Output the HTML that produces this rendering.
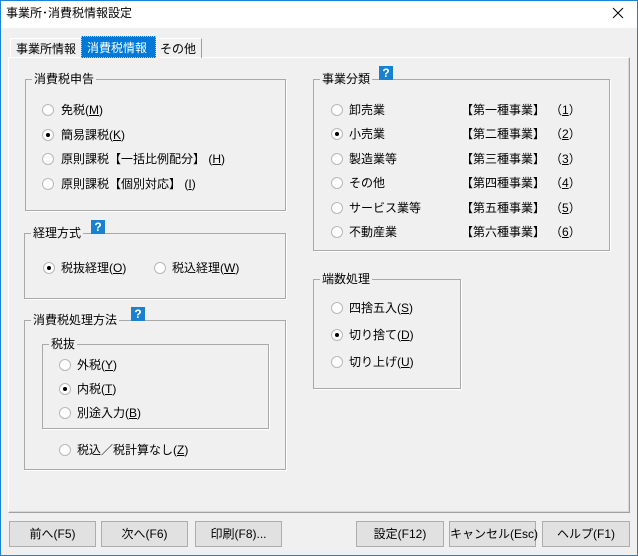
<!DOCTYPE html>
<html><head><meta charset="utf-8"><style>
*{margin:0;padding:0;box-sizing:border-box}
body{width:638px;height:556px;background:#f0f0f0;font-family:"Liberation Sans","Noto Sans CJK JP",sans-serif;font-size:12px;color:#000;position:relative;overflow:hidden}
.win{position:absolute;left:0;top:0;width:638px;height:556px;border:1px solid #1883d7}
.title{position:absolute;left:1px;top:1px;width:636px;height:27px;background:#fff}
.t{position:absolute;white-space:nowrap;line-height:14px}
.panel{position:absolute;left:8px;top:57px;width:622px;height:456px;border:1px solid #fff;border-right-color:#a0a0a0;border-bottom-color:#a0a0a0;box-shadow:inset -1px -1px 0 #d8d8d8}
.tab{position:absolute;top:38px;height:20px;border:1px solid #fff;border-bottom:none;border-right-color:#a0a0a0;padding:3px 5px 0 5px;line-height:14px;white-space:nowrap}
.grp{position:absolute;border:1px solid #a9a9a9;box-shadow:1px 1px 0 #fff}
.lbl{position:absolute;top:-8px;background:#f0f0f0;padding:0 2px;line-height:14px;white-space:nowrap}
.r{position:absolute;width:12px;height:12px;border-radius:50%;border:1px solid #b8b8b8;background:#fff;margin:-6px 0 0 -6px}
.r.on::after{content:"";position:absolute;left:3px;top:3px;width:4px;height:4px;border-radius:50%;background:#000}
.q{position:absolute;width:14px;height:14px;background:#1a80d0;color:#fff;font-weight:bold;font-size:12px;line-height:14px;text-align:center}
.btn{position:absolute;top:521px;height:26px;border:1px solid #adadad;background:#e1e1e1;text-align:center;line-height:24px;white-space:nowrap}
u{text-decoration:underline}
</style></head><body>
<div class="win"></div>
<div class="title"></div>
<div class="t" style="left:6px;top:6px">事業所･消費税情報設定</div>
<svg style="position:absolute;left:612px;top:7px" width="12" height="12"><path d="M1 1L11 11M11 1L1 11" stroke="#000" stroke-width="1"/></svg>

<div class="panel"></div>
<div class="tab" style="left:10px;width:72px">事業所情報</div>
<div class="tab" style="left:81px;top:36px;height:22px;width:75px;background:#0078d7;color:#fff;border:1px dotted #f0c040;padding-top:4px">消費税情報</div>
<div class="tab" style="left:156px;width:46px;padding-left:3px">その他</div>

<div class="grp" style="left:25px;top:79px;width:261px;height:132px"><span class="lbl" style="left:6px">消費税申告</span></div>
<div class="r" style="left:48px;top:110px"></div><div class="t" style="left:61px;top:103px">免税(<u>M</u>)</div>
<div class="r on" style="left:48px;top:135px"></div><div class="t" style="left:61px;top:128px">簡易課税(<u>K</u>)</div>
<div class="r" style="left:48px;top:159px"></div><div class="t" style="left:61px;top:152px">原則課税【一括比例配分】 (<u>H</u>)</div>
<div class="r" style="left:48px;top:184px"></div><div class="t" style="left:61px;top:177px">原則課税【個別対応】 (<u>I</u>)</div>

<div class="grp" style="left:24px;top:233px;width:262px;height:66px"><span class="lbl" style="left:6px">経理方式</span></div>
<div class="q" style="left:91px;top:220px">?</div>
<div class="r on" style="left:49px;top:268px"></div><div class="t" style="left:61px;top:261px">税抜経理(<u>O</u>)</div>
<div class="r" style="left:160px;top:268px"></div><div class="t" style="left:172px;top:261px">税込経理(<u>W</u>)</div>

<div class="grp" style="left:24px;top:320px;width:262px;height:150px"><span class="lbl" style="left:6px">消費税処理方法</span></div>
<div class="q" style="left:131px;top:307px">?</div>
<div class="grp" style="left:42px;top:344px;width:227px;height:85px"><span class="lbl" style="left:6px">税抜</span></div>
<div class="r" style="left:65px;top:365px"></div><div class="t" style="left:77px;top:358px">外税(<u>Y</u>)</div>
<div class="r on" style="left:65px;top:389px"></div><div class="t" style="left:77px;top:382px">内税(<u>T</u>)</div>
<div class="r" style="left:65px;top:413px"></div><div class="t" style="left:77px;top:406px">別途入力(<u>B</u>)</div>
<div class="r" style="left:65px;top:450px"></div><div class="t" style="left:77px;top:443px">税込／税計算なし(<u>Z</u>)</div>

<div class="grp" style="left:313px;top:79px;width:297px;height:172px"><span class="lbl" style="left:6px">事業分類</span></div>
<div class="q" style="left:379px;top:66px">?</div>
<div class="r" style="left:337px;top:110px"></div><div class="t" style="left:349px;top:103px">卸売業</div><div class="t" style="left:461px;top:103px">【第一種事業】</div><div class="t" style="left:550px;top:103px">（<u>1</u>）</div>
<div class="r on" style="left:337px;top:134px"></div><div class="t" style="left:349px;top:127px">小売業</div><div class="t" style="left:461px;top:127px">【第二種事業】</div><div class="t" style="left:550px;top:127px">（<u>2</u>）</div>
<div class="r" style="left:337px;top:159px"></div><div class="t" style="left:349px;top:152px">製造業等</div><div class="t" style="left:461px;top:152px">【第三種事業】</div><div class="t" style="left:550px;top:152px">（<u>3</u>）</div>
<div class="r" style="left:337px;top:183px"></div><div class="t" style="left:349px;top:176px">その他</div><div class="t" style="left:461px;top:176px">【第四種事業】</div><div class="t" style="left:550px;top:176px">（<u>4</u>）</div>
<div class="r" style="left:337px;top:208px"></div><div class="t" style="left:349px;top:201px">サービス業等</div><div class="t" style="left:461px;top:201px">【第五種事業】</div><div class="t" style="left:550px;top:201px">（<u>5</u>）</div>
<div class="r" style="left:337px;top:232px"></div><div class="t" style="left:349px;top:225px">不動産業</div><div class="t" style="left:461px;top:225px">【第六種事業】</div><div class="t" style="left:550px;top:225px">（<u>6</u>）</div>

<div class="grp" style="left:313px;top:279px;width:148px;height:110px"><span class="lbl" style="left:6px">端数処理</span></div>
<div class="r" style="left:337px;top:308px"></div><div class="t" style="left:349px;top:301px">四捨五入(<u>S</u>)</div>
<div class="r on" style="left:337px;top:335px"></div><div class="t" style="left:349px;top:328px">切り捨て(<u>D</u>)</div>
<div class="r" style="left:337px;top:362px"></div><div class="t" style="left:349px;top:355px">切り上げ(<u>U</u>)</div>

<div class="btn" style="left:9px;width:87px">前へ(F5)</div>
<div class="btn" style="left:101px;width:87px">次へ(F6)</div>
<div class="btn" style="left:195px;width:87px">印刷(F8)...</div>
<div class="btn" style="left:356px;width:88px">設定(F12)</div>
<div class="btn" style="left:449px;width:87px">キャンセル(Esc)</div>
<div class="btn" style="left:542px;width:88px">ヘルプ(F1)</div>
</body></html>
